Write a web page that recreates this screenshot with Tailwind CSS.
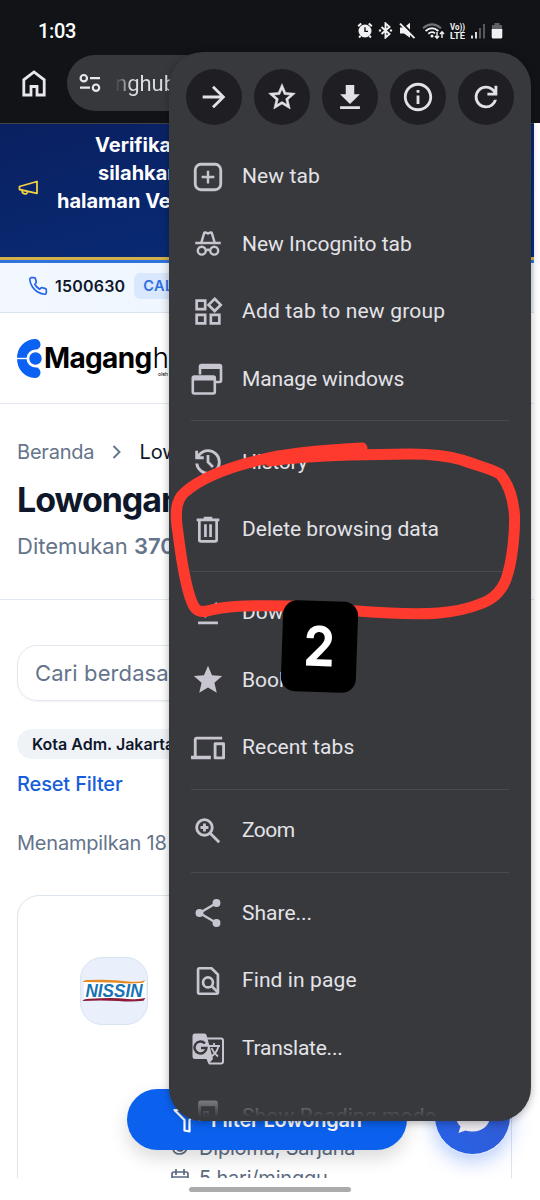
<!DOCTYPE html>
<html lang="id">
<head>
    <meta charset="UTF-8">
    <meta name="viewport" content="width=device-width, initial-scale=1.0">
    <title>Maganghub - Lowongan</title>
    <script src="https://cdn.jsdelivr.net/npm/@tailwindcss/browser@4"></script>
</head>
<body class="bg-white">
<div class="relative w-[540px] h-[1200px] overflow-hidden bg-white font-['Inter',sans-serif]">

    <!-- Status bar + toolbar -->
    <div class="h-[123px] bg-[#121316] text-white">
        <div class="flex h-[55px] items-center justify-between pt-[6px] pl-[38px] pr-[37px]">
            <span class="font-['Roboto',sans-serif] text-[20px] font-medium tracking-[-0.3px] leading-none">1:03</span>
            <div class="flex items-center">
                <svg class="w-[16px] h-[17px]" viewBox="0 0 16 17"><circle cx="8" cy="9" r="6.5" fill="#f1f1f3"/><path d="M1.2 4.2l3-2.8M14.8 4.2l-3-2.8M3.5 13.8l-1.4 1.7M12.5 13.8l1.4 1.7" stroke="#f1f1f3" stroke-width="2" fill="none"/><path d="M8 5.3V9.4h3" stroke="#121316" stroke-width="1.4" fill="none"/></svg>
                <svg class="ml-[5px] w-[15px] h-[17px]" viewBox="0 0 14 17" fill="none" stroke="#f1f1f3" stroke-width="1.9"><path d="M3 5l8 7-4 3.6V1.4L11 5l-8 7"/><path d="M.4 8.5h2.2M11.4 8.5h2.2" stroke-width="2.2"/></svg>
                <svg class="ml-[6px] w-[17px] h-[17px]" viewBox="0 0 17 17"><path d="M1 5.500h4l6-4.800v15.100L5 11.500H1z" fill="#f1f1f3"/><path d="M2.400 .6l14 14" stroke="#121316" stroke-width="2"/><path d="M1 1.600l14.500 14.500" stroke="#f1f1f3" stroke-width="2"/></svg>
                <svg class="ml-[6px] w-[23px] h-[18px]" viewBox="0 0 23 18" fill="none"><path d="M1 6.2Q10 -1.5 19 6.2" stroke="#707175" stroke-width="2"/><path d="M3.6 9Q10 3.6 16.4 9" stroke="#f1f1f3" stroke-width="2"/><path d="M6.3 11.7Q10 8.8 13 11.4" stroke="#f1f1f3" stroke-width="1.8"/><circle cx="10" cy="14" r="1.5" fill="#f1f1f3"/><path d="M15 10v6M13 14l2 2.3 2-2.3M20 16v-6M18 12l2-2.3 2 2.3" stroke="#f1f1f3" stroke-width="1.4"/></svg>
                <svg class="ml-[4px] h-[18px] w-[17px]" viewBox="0 0 17 18" fill="#f1f1f3" font-family="Roboto" font-weight="700" font-size="9"><text x="1" y="8" textLength="15" lengthAdjust="spacingAndGlyphs">Vo))</text><text x="1" y="16.500" textLength="15" lengthAdjust="spacingAndGlyphs">LTE</text></svg>
                <svg class="ml-[5px] w-[14px] h-[16px]" viewBox="0 0 14 16"><path d="M1 12.5v3M5 9v6.500" stroke="#f1f1f3" stroke-width="1.8"/><path d="M9 5v10.500M13 1v14.500" stroke="#606165" stroke-width="1.800"/></svg>
                <svg class="ml-[6px] w-[12px] h-[17px]" viewBox="0 0 12 17"><path d="M3.500 1h5v2H11v5H1V3h2.500z" fill="#606165"/><path d="M.7 7h10.600v8a1.500 1.500 0 0 1-1.500 1.500H2.200A1.500 1.500 0 0 1 .7 15z" fill="#f1f1f3"/></svg>
            </div>
        </div>
        <div class="flex h-[56px] items-center pl-[21px]">
            <svg class="w-[26px] h-[28px]" viewBox="0 0 26 28" fill="none" stroke="#e8e8ec" stroke-width="2.800"><path d="M2.800 26V10.800L13 3l10.200 7.800V26H16v-8.500h-6V26z"/></svg>
            <div class="ml-[20px] flex h-[56px] w-[400px] items-center rounded-full bg-[#37383c] pl-[12px]">
                <svg class="w-[22px] h-[20px]" viewBox="0 0 22 20" fill="none" stroke="#e8e8ec" stroke-width="2.200"><circle cx="4.800" cy="5.200" r="3.200"/><path d="M11 5.200h10M1 14.700h10"/><circle cx="17" cy="14.700" r="3.200"/></svg>
                <span class="ml-[14px] bg-linear-to-r from-[#37383c] from-0% to-[#dddde1] to-[16px] bg-clip-text font-['Roboto',sans-serif] text-[22px] text-transparent">nghub</span>
            </div>
        </div>
    </div>

    <!-- Web page -->
    <div class="relative h-[1055px] w-[540px] overflow-hidden">
        <div class="w-[534px]">
            <div class="flex h-[140px] items-start border-t border-b-[3px] border-t-[#3f4349] border-b-[#2f74dc] bg-linear-to-br from-[#0a2060] to-[#06307f]">
                <div class="relative h-full w-full border-b-[3px] border-[#d4b04a]">
                    <svg class="mt-[56px] ml-[18px] w-[21px] h-[16px]" viewBox="0 0 21 16" fill="none" stroke="#f2cf45" stroke-width="1.800" stroke-linejoin="round"><path d="M1.500 6.500L19 1.500v11.800L1.500 9.500zM4 10.200c0 4.600 5.500 4.800 5.500 1.300"/></svg>
                    <div class="absolute top-[7px] left-[57px] w-[420px] text-[20px] font-bold leading-[28px] whitespace-nowrap text-white">
                        <p class="pl-[38px]">Verifikasi akun</p>
                        <p class="pl-[41px]">silahkan buka</p>
                        <p>halaman Verifikasi</p>
                    </div>
                </div>
            </div>
            <div class="flex h-[50px] items-center border-b border-[#dbe3ee] bg-linear-to-r from-[#f3f8ff] to-[#e8f2fd] pb-[3px] pl-[28px]">
                <svg class="w-[20px] h-[20px]" viewBox="0 0 24 24" fill="none" stroke="#2563eb" stroke-width="2" stroke-linejoin="round"><path d="M22 16.920v3a2 2 0 0 1-2.180 2 19.790 19.790 0 0 1-8.630-3.070 19.500 19.500 0 0 1-6-6 19.790 19.790 0 0 1-3.070-8.670A2 2 0 0 1 4.110 2h3a2 2 0 0 1 2 1.720c.127.960.361 1.903.7 2.810a2 2 0 0 1-.45 2.110L8.090 9.910a16 16 0 0 0 6 6l1.270-1.270a2 2 0 0 1 2.110-.45c.907.339 1.850.573 2.810.7A2 2 0 0 1 22 16.920z"/></svg>
                <span class="ml-[7px] text-[16px] font-semibold tracking-[0.200px] text-[#0f172a]">1500630</span>
                <span class="ml-[9px] flex h-[26px] items-center rounded-md bg-[#d9e8fd] px-[9px] text-[14.500px] font-semibold tracking-[0.400px] text-[#2f6fe4]">CALL</span>
            </div>
            <div class="flex h-[91px] items-center border-b border-[#e2e8f0] pl-[17px]">
                <svg class="w-[25px] h-[39px]" viewBox="0 0 25 39"><path d="M18 5.500C11 6 5.500 11 5.500 19.500S11 33 18 33.500" stroke="#0b62f2" stroke-width="11" fill="none" stroke-linecap="round"/><path d="M0 19.500h10" stroke="#fff" stroke-width="1.400"/><circle cx="18.500" cy="19.500" r="9" fill="#fff"/><circle cx="18.500" cy="19.500" r="6.200" fill="#0b62f2"/></svg>
                <div class="relative ml-[2px] text-[28px] leading-none font-bold tracking-[-0.650px] text-black">Magang<span class="ml-px font-light">hub</span><span class="absolute top-[28px] left-[114px] text-[5px] leading-none font-normal tracking-normal">oleh</span></div>
            </div>
            <div class="h-[196px] border-b border-[#e2e8f0] pl-[17px]">
                <div class="flex items-center pt-[33px] text-[20px] leading-[30px] text-[#64748b]">
                    <span class="tracking-[-0.200px]">Beranda</span>
                    <svg class="ml-[18px] mr-[18px] w-[9px] h-[14px]" viewBox="0 0 9 14" fill="none" stroke="#64748b" stroke-width="1.900"><path d="M1.500 1l6 6-6 6"/></svg>
                    <span class="text-[#0f172a]">Lowongan</span>
                </div>
                <h1 class="mt-[13px] text-[34px] leading-[40px] font-bold tracking-[-1.050px] text-[#0f172a]">Lowongan</h1>
                <p class="mt-[10px] text-[22px] leading-[32px] text-[#64748b]">Ditemukan <b class="font-semibold">370</b></p>
            </div>
            <div class="pl-[17px]">
                <div class="mt-[45px] flex h-[56px] w-[495px] items-center rounded-[20px] border border-[#e2e8f0] pl-[17px] text-[22px] tracking-[0.100px] text-[#64748b] shadow-xs">Cari berdasarkan</div>
                <div class="mt-[28px] flex h-[30px] w-[260px] items-center rounded-full bg-[#eff3f8] pl-[15px] text-[16px] font-semibold text-[#0f172a]">Kota Adm. Jakarta</div>
                <p class="mt-[9px] text-[20px] leading-[32px] font-medium tracking-[-0.150px] text-[#155ddb]">Reset Filter</p>
                <p class="mt-[27px] text-[20px] leading-[32px] tracking-[-0.200px] text-[#64748b]">Menampilkan 18</p>
                <div class="mt-[36px] h-[320px] w-[495px] rounded-[22px] border border-[#dde4ec] pt-[61px] pl-[62px]">
                    <div class="flex h-[68px] w-[68px] flex-col items-center justify-center rounded-[22px] border border-[#d9e3f2] bg-[#e9effb]">
                        <svg class="h-[24px] w-[66px]" viewBox="0 0 66 24"><path d="M3 2h62v19H3z" fill="#fff"/><path d="M1.500 3Q3 .5 8 1 30 0 48 2.500q10 1 16.500-1.200L62 3.800Q48 5.300 36 3.700 20 3 1.500 3z" fill="#e58a25"/><path d="M1.500 22Q3 19.500 9 19.700q22-1.500 38 .2 10 1 17.500-.8l-2 2.700q-12 1.500-25 .2-18-1-36 0z" fill="#8b1b38"/><text x="33" y="18" text-anchor="middle" textLength="57" lengthAdjust="spacingAndGlyphs" font-family="Liberation Sans" font-weight="bold" font-style="italic" font-size="17.500" fill="#1673b5">NISSIN</text></svg>
                    </div>
                    <div class="mt-[108px] ml-[92px] flex items-center gap-[11px] text-[20px] leading-[30px] tracking-[-0.200px] text-[#5b6b82]">
                        <svg class="w-[16px] h-[20px]" viewBox="0 0 16 20" fill="none" stroke="#5b6b82" stroke-width="1.700"><path d="M1 10c0 8 12 8 14 0M3 9c3 5 7 5 9 1"/></svg>
                        <span>Diploma, Sarjana</span>
                    </div>
                    <div class="ml-[91px] flex items-center gap-[10px] text-[20px] leading-[30px] tracking-[-0.200px] text-[#5b6b82]">
                        <svg class="w-[18px] h-[18px]" viewBox="0 0 18 18" fill="none" stroke="#5b6b82" stroke-width="1.700"><rect x="1" y="3" width="16" height="14" rx="2"/><path d="M5 0v6M13 0v6M1 8h16"/></svg>
                        <span>5 hari/minggu</span>
                    </div>
                </div>
            </div>
        </div>

        <!-- Floating buttons -->
        <div class="absolute top-[966px] left-[127px] flex h-[61px] w-[280px] items-center rounded-full bg-[#0b61ee] pl-[46px] text-[20px] font-semibold text-white shadow-[0_8px_18px_rgba(0,0,0,0.150)]">
            <svg class="w-[24px] h-[26px]" viewBox="0 0 24 26" fill="none" stroke="#fff" stroke-width="2.200" stroke-linejoin="round"><path d="M1.500 3h21L16.500 13v11.500l-5-1V13z"/></svg>
            <span class="ml-[14px] tracking-[-0.250px]">Filter Lowongan</span>
        </div>
        <div class="absolute top-[955px] left-[434px] flex h-[77px] w-[77px] items-center justify-center rounded-full border border-[#d6e4ff] bg-linear-to-tr from-[#2563eb] to-[#3457c8] shadow-[0_6px_20px_rgba(37,99,235,0.350)]">
            <svg class="w-[36px] h-[34px]" viewBox="0 0 36 34"><path d="M18 2C8 2 1 8 1 16c0 5 2 8 4.500 10.500L3.500 33l7-2.500c2 .6 5 1 7.500 1 10 0 17-7 17-15S28 2 18 2z" fill="#eceaf0"/></svg>
        </div>
    </div>

    <!-- Gesture bar -->
    <div class="flex h-[22px] justify-center bg-white pt-[9px]">
        <div class="h-[5px] w-[162px] rounded-full bg-[#ababab]"></div>
    </div>

    <!-- Browser menu -->
    <div class="absolute top-[52px] left-[169px] h-[1069px] w-[362px] overflow-hidden rounded-[34px] bg-[#38393d] font-['Roboto',sans-serif] text-[21px] text-[#e3e3e8] shadow-[0_2px_8px_rgba(0,0,0,0.300)]">
        <div class="flex gap-[12px] pt-[17px] pb-[18px] pl-[17px]">
            <div class="flex h-[56px] w-[56px] items-center justify-center rounded-full bg-[#1f1f23]"><svg class="w-[34px] h-[34px]" viewBox="0 0 24 24" fill="#e3e1e8"><path d="M12 4l-1.410 1.410L16.170 11H4v2h12.170l-5.580 5.590L12 20l8-8z"/></svg></div>
            <div class="flex h-[56px] w-[56px] items-center justify-center rounded-full bg-[#1f1f23]"><svg class="w-[32px] h-[32px]" viewBox="0 0 24 24" fill="#e3e1e8" stroke="#e3e1e8" stroke-width=".4"><path d="M22 9.240l-7.190-.62L12 2 9.190 8.630 2 9.240l5.460 4.730L5.820 21 12 17.270 18.180 21l-1.630-7.030L22 9.240zM12 15.400l-3.760 2.270 1-4.280-3.320-2.880 4.380-.38L12 6.100l1.710 4.040 4.380.38-3.320 2.880 1 4.280L12 15.400z"/></svg></div>
            <div class="flex h-[56px] w-[56px] items-center justify-center rounded-full bg-[#1f1f23]"><svg class="w-[34px] h-[34px]" viewBox="0 0 24 24" fill="#e3e1e8"><path d="M5 20.500h14v-2H5v2zM19 10h-4V3.500H9V10H5l7 7 7-7z"/></svg></div>
            <div class="flex h-[56px] w-[56px] items-center justify-center rounded-full bg-[#1f1f23]"><svg class="w-[34px] h-[34px]" viewBox="0 0 24 24" fill="#e3e1e8"><path d="M11 7h2v2h-2zm0 4h2v6h-2zm1-9C6.480 2 2 6.480 2 12s4.480 10 10 10 10-4.480 10-10S17.520 2 12 2zm0 18c-4.410 0-8-3.590-8-8s3.590-8 8-8 8 3.590 8 8-3.590 8-8 8z"/></svg></div>
            <div class="flex h-[56px] w-[56px] items-center justify-center rounded-full bg-[#1f1f23]"><svg class="w-[34px] h-[34px]" viewBox="0 0 24 24" fill="#e3e1e8"><path d="M12 20q-3.350 0-5.675-2.325T4 12t2.325-5.675T12 4q1.725 0 3.300.713T18 6.750V4h2v7h-7V9h4.200q-.8-1.400-2.187-2.200T12 6Q9.500 6 7.750 7.750T6 12t1.750 4.250T12 18q1.925 0 3.475-1.100T17.650 14h2.100q-.7 2.650-2.850 4.325T12 20Z"/></svg></div>
        </div>

        <div class="flex h-[67.600px] items-center gap-[17px] pl-[22px]">
            <svg class="w-[34px] h-[34px]" viewBox="0 0 24 24" fill="none" stroke="#c7c5d0" stroke-width="2"><rect x="3" y="3" width="18" height="18" rx="4"/><path d="M12 7.500v9M7.500 12h9" stroke-width="1.700"/></svg>
            <span class="tracking-[0.100px]">New tab</span>
        </div>
        <div class="flex h-[67.600px] items-center gap-[17px] pl-[22px]">
            <svg class="w-[34px] h-[34px]" viewBox="0 0 24 24" fill="none" stroke="#c7c5d0" stroke-width="1.700"><path d="M3 11.300h18"/><path d="M7.300 11l1.900-6.500q.2-.8 1-.6l1.800.6 1.800-.6q.8-.2 1 .6l1.900 6.500"/><circle cx="7.600" cy="16.700" r="2.800"/><circle cx="16.400" cy="16.700" r="2.800"/><path d="M10.400 16.500q1.600-1 3.200 0"/></svg>
            <span>New Incognito tab</span>
        </div>
        <div class="flex h-[67.600px] items-center gap-[17px] pl-[22px]">
            <svg class="w-[34px] h-[34px]" viewBox="0 0 24 24" fill="none" stroke="#c7c5d0" stroke-width="1.900"><path d="M4 4h6v6H4zM4 14h6v6H4zM14 14h6v6h-6zM16.700 2.700L21 7l-4.300 4.300L12.400 7z"/></svg>
            <span class="tracking-[0.180px]">Add tab to new group</span>
        </div>
        <div class="flex h-[67.600px] items-center gap-[17px] pl-[22px]">
            <svg class="w-[34px] h-[34px]" viewBox="0 0 34 34" fill="none" stroke="#c7c5d0" stroke-width="2.600"><path d="M9 11.500V3.500q0-1.500 1.500-1.500h18q1.500 0 1.500 1.500v14q0 1.500-1.500 1.500H25"/><path d="M9 4h21" stroke-width="4"/><rect x="1.800" y="13.500" width="22" height="17" rx="1.500"/><path d="M2 15.500h21.500" stroke-width="4"/></svg>
            <span class="tracking-[-0.120px]">Manage windows</span>
        </div>
        <div class="ml-[22px] flex h-[15.200px] w-[318px] items-center"><div class="h-px w-full bg-[#4a4b50]"></div></div>
        <div class="flex h-[67.600px] items-center gap-[17px] pl-[22px]">
            <svg class="w-[34px] h-[34px]" viewBox="0 0 24 24" fill="#c7c5d0"><path d="M12 21q-3.450 0-6.012-2.287T3.050 13H5.100q.35 2.600 2.313 4.300T12 19q2.925 0 4.963-2.037T19 12t-2.037-4.962T12 5q-1.725 0-3.225.8T6.250 8H9v2H3V4h2v2.350q1.275-1.600 3.113-2.475T12 3q1.875 0 3.513.713t2.850 1.924t1.925 2.850T21 12t-.712 3.513t-1.925 2.850t-2.850 1.925T12 21m2.800-4.800L11 12.400V7h2v4.600l3.200 3.200z"/></svg>
            <span class="tracking-[-0.200px]">History</span>
        </div>
        <div class="flex h-[67.600px] items-center gap-[17px] pl-[22px]">
            <svg class="w-[34px] h-[34px]" viewBox="0 0 24 24" fill="none" stroke="#c7c5d0" stroke-width="1.900"><path d="M4 4.900h16M9 3.600h6"/><path d="M5.900 5v14q0 1 1 1h10.200q1 0 1-1V5M10.200 8v9M13.800 8v9"/></svg>
            <span>Delete browsing data</span>
        </div>
        <div class="ml-[22px] flex h-[15.200px] w-[318px] items-center"><div class="h-px w-full bg-[#4a4b50]"></div></div>
        <div class="flex h-[67.600px] items-center gap-[17px] pl-[22px]">
            <svg class="w-[34px] h-[34px]" viewBox="0 0 24 24" fill="none" stroke="#c7c5d0" stroke-width="2"><path d="M5 19h14M5.500 9l4.500 5 8.500-9"/></svg>
            <span>Downloads</span>
        </div>
        <div class="flex h-[67.600px] items-center gap-[17px] pl-[22px]">
            <svg class="w-[34px] h-[34px]" viewBox="0 0 24 24" fill="#c7c5d0"><path d="M12 17.270L18.180 21l-1.640-7.030L22 9.240l-7.190-.61L12 2 9.190 8.630 2 9.240l5.460 4.730L5.820 21z"/></svg>
            <span>Bookmarks</span>
        </div>
        <div class="flex h-[67.600px] items-center gap-[17px] pl-[22px]">
            <svg class="w-[34px] h-[34px]" viewBox="0 0 24 24" fill="#c7c5d0"><path d="M4 6h18V4H4c-1.100 0-2 .9-2 2v11.500H0V20h14v-2.500H4V6zm19 2h-6c-.55 0-1 .45-1 1v10c0 .55.45 1 1 1h6c.55 0 1-.45 1-1V9c0-.55-.45-1-1-1zm-1 10h-4v-8h4v8z"/></svg>
            <span class="tracking-[0.150px]">Recent tabs</span>
        </div>
        <div class="ml-[22px] flex h-[15.200px] w-[318px] items-center"><div class="h-px w-full bg-[#4a4b50]"></div></div>
        <div class="flex h-[67.600px] items-center gap-[17px] pl-[22px]">
            <svg class="w-[34px] h-[34px]" viewBox="0 0 24 24" fill="none" stroke="#c7c5d0" stroke-width="2"><circle cx="9.500" cy="9.500" r="5.500"/><path d="M13.700 13.700l6.200 6.200M9.500 6.700v5.600M6.700 9.500h5.600"/></svg>
            <span class="tracking-[-0.500px]">Zoom</span>
        </div>
        <div class="ml-[22px] flex h-[15.200px] w-[318px] items-center"><div class="h-px w-full bg-[#4a4b50]"></div></div>
        <div class="flex h-[67.600px] items-center gap-[17px] pl-[22px]">
            <svg class="w-[34px] h-[34px]" viewBox="0 0 24 24" fill="#c7c5d0"><path d="M18 5L6 12l12 7" fill="none" stroke="#c7c5d0" stroke-width="1.600"/><circle cx="18" cy="5" r="2.800"/><circle cx="6" cy="12" r="2.800"/><circle cx="18" cy="19" r="2.800"/></svg>
            <span>Share...</span>
        </div>
        <div class="flex h-[67.600px] items-center gap-[17px] pl-[22px]">
            <svg class="w-[34px] h-[34px]" viewBox="0 0 24 24" fill="none" stroke="#c7c5d0" stroke-width="1.900"><path d="M6 3h8.500L19 7.500V20q0 1-1 1H6q-1 0-1-1V4q0-1 1-1z"/><circle cx="12" cy="13" r="3.500"/><path d="M14.500 15.500l4.500 4.500"/></svg>
            <span class="tracking-[0.100px]">Find in page</span>
        </div>
        <div class="flex h-[67.600px] items-center gap-[17px] pl-[22px]">
            <svg class="w-[34px] h-[34px]" viewBox="0 0 34 34"><path d="M14 6.500h16q2 0 2 2v21q0 2-2 2H18" fill="none" stroke="#c7c5d0" stroke-width="2"/><path d="M4 1.500h9.500q1.500 0 2 1.500L22 27l-4.500 5-2-5H4q-2.500 0-2.500-2.500V4Q1.500 1.500 4 1.500z" fill="#c7c5d0"/><path d="M14 11.500A6 6 0 1 0 15.500 16H10" fill="none" stroke="#38393d" stroke-width="2.400"/><path d="M17.500 14H29M23 11v3M27.500 14q-1.500 7-8 11M20.500 16q2 5 6.500 8.500" fill="none" stroke="#c7c5d0" stroke-width="1.800"/></svg>
            <span class="tracking-[-0.250px]">Translate...</span>
        </div>
        <div class="flex h-[67.600px] items-center gap-[17px] pl-[22px]">
            <svg class="w-[34px] h-[34px]" viewBox="0 0 34 34" fill="none" stroke="#c7c5d0" stroke-width="2.800"><rect x="8.500" y="3" width="17" height="26" rx="1.500"/><path d="M8 5h18" stroke-width="4.500"/><path d="M13 13h4v4h-4z" stroke-width="2"/></svg>
            <span class="tracking-[0.150px]">Show Reading mode</span>
        </div>
        <div class="absolute bottom-0 left-0 h-[39px] w-full bg-linear-to-b from-[#38393d]/0 to-[#38393d] to-90%"></div>
    </div>

    <!-- Hand-drawn marker -->
    <svg class="absolute top-0 left-0 h-[1200px] w-[540px]" viewBox="0 0 540 1200" fill="none" stroke="#fe3a2e" stroke-width="11" stroke-linecap="round" stroke-linejoin="round">
        <path d="M362 448C325 450 285 453 260 460C230 467 202 477 184 493C175 501 175 515 178 533C181 555 183 575 190 597C194 609 197 613 207 611C225 606 245 605 290 606C315 608 350 611 390 613C425 615 455 614 480 604C498 598 505 585 508 573C513 555 515 530 514.500 515C513 495 506 481 500 474C490 468 475 465 462 460C445 455 430 454 410 454L350 455C320 456 295 457 270 461"/>
    </svg>
    <div class="absolute top-[601px] left-[282px] flex h-[91px] w-[75px] rotate-[2deg] items-center justify-center rounded-[14px] bg-black text-[55px] font-bold text-white"><span class="scale-x-90">2</span></div>
</div>
</body>
</html>
